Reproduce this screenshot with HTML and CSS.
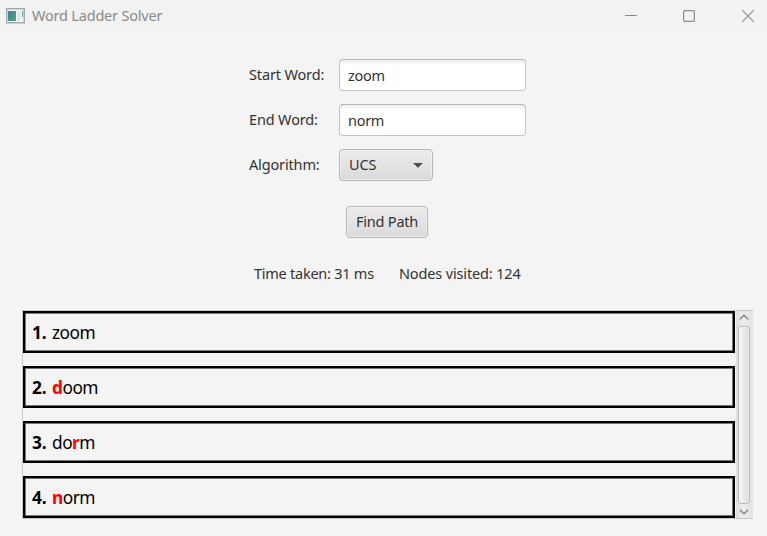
FILE: index.html
```html
<!DOCTYPE html>
<html lang="en">
<head>
<meta charset="utf-8">
<title>Word Ladder Solver</title>
<link rel="stylesheet" href="styles.css">
</head>
<body>
<header class="titlebar">
  <svg class="app-icon" width="19" height="16" viewBox="0 0 19 16">
    <defs><linearGradient id="g" x1="0" y1="0" x2="1" y2="1"><stop offset="0" stop-color="#3e7ca0"/><stop offset="1" stop-color="#55a878"/></linearGradient></defs>
    <rect x=".75" y=".75" width="17.5" height="14" fill="#f5f7f8" stroke="#9b9fa6" stroke-width="1.3"/>
    <rect x="2" y="3" width="8" height="10" fill="url(#g)"/>
    <rect x="11" y="3" width="4" height="10" fill="#e5e8e8"/>
    <path d="M16.5 3v6" stroke="#56a693"/>
  </svg>
  <h1 class="title">Word Ladder Solver</h1>
  <div class="controls">
    <svg width="130" height="14" viewBox="0 0 130 14" fill="none" stroke="#8b8b8b">
      <path d="M0 6.5h12"/>
      <rect x="58.6" y="1.6" width="10.8" height="10.8" rx="1.2" stroke-width="1.2"/>
      <path d="M117.2 1.2l11.6 11.6M128.8 1.2l-11.6 11.6" stroke-width="1.1"/>
    </svg>
  </div>
</header>
<main>
  <div class="form">
    <label class="label" for="start">Start Word:</label><input id="start" class="field" value="zoom">
    <label class="label" for="end">End Word:</label><input id="end" class="field" value="norm">
    <span class="label">Algorithm:</span>
    <div class="combo"><span class="label">UCS</span><svg width="10" height="6" viewBox="0 0 10 6"><path d="M0 1h10L5 6z" fill="#fff"/><path d="M0 0h10L5 5z" fill="#4e4e4e"/></svg></div>
  </div>
  <button class="find">Find Path</button>
  <div class="stats"><span class="time">Time taken: 31 ms</span><span>Nodes visited: 124</span></div>
  <div class="results">
    <ol class="list">
      <li><b>1.</b><span>zoom</span></li>
      <li><b>2.</b><span><em>d</em>oom</span></li>
      <li><b>3.</b><span>do<em>r</em>m</span></li>
      <li><b>4.</b><span><em>n</em>orm</span></li>
    </ol>
    <div class="scrollbar">
      <svg width="10" height="6" viewBox="0 0 10 6"><path d="M.8 5.2L5 1.3l4.2 3.9" fill="none" stroke="#858585" stroke-width="1.4"/></svg>
      <div class="thumb"></div>
      <svg width="10" height="6" viewBox="0 0 10 6"><path d="M.8.8L5 4.7 9.2.8" fill="none" stroke="#858585" stroke-width="1.4"/></svg>
    </div>
  </div>
</main>
</body>
</html>
```
FILE: styles.css
```css
* { box-sizing: border-box; }
body { margin: 0; width: 767px; height: 536px; overflow: hidden; background: #f4f4f4; color: #333; font: 14.5px/20px "Noto Sans", "Open Sans", sans-serif; letter-spacing: -.2px; }
.titlebar { display: flex; align-items: center; height: 31px; padding: 0 12px 0 6px; background: #f2f2f2; color: #8b8b8b; }
.title { margin: 0 0 0 7px; padding-bottom: 2px; font-size: 14.5px; font-weight: 400; }
.controls { display: flex; margin-left: auto; }
main { display: flex; flex-direction: column; }
.form { display: grid; grid-template-columns: 90px 187px; grid-auto-rows: 32px; row-gap: 13px; align-items: center; margin: 28px 0 0 249px; }
.label { padding-bottom: 2px; letter-spacing: -.15px; }
.field { width: 187px; height: 32px; padding: 0 8px 1px; border: 1px solid #c4c4c4; border-top-color: #b5b5b5; border-radius: 4px; background: linear-gradient(#ececec, #fff 5px); color: #333; font: inherit; letter-spacing: -.3px; outline: 0; }
.combo, .find { border: 1px solid #b5b5b5; border-radius: 4px; background: linear-gradient(#ececec, #dadada); box-shadow: inset 0 0 0 1px rgba(255,255,255,.45); }
.combo { display: flex; align-items: center; justify-content: space-between; width: 94px; height: 32px; padding: 0 9px; }
.combo svg { margin-top: 2px; }
.find { width: 82px; height: 32px; margin: 25px 0 0 346px; padding: 0 0 2px; color: #333; font: inherit; letter-spacing: inherit; }
.stats { display: flex; margin: 25px 0 0 254px; white-space: nowrap; letter-spacing: -.15px; }
.time { width: 145px; letter-spacing: -.25px; }
.results { display: flex; width: 731px; height: 209px; margin: 27px 0 0 22px; border: 1px solid #c8c8c8; border-right: 0; }
.list { display: flex; flex-direction: column; gap: 13px; width: 713px; margin: 0; padding: 0; list-style: none; color: #000; font-size: 17.3px; letter-spacing: -.5px; }
.list li { display: flex; align-items: center; width: 712px; height: 42px; padding: 2px 0 0 7px; border: 2px solid #000; box-shadow: inset 0 0 0 1px #777; }
.list b { width: 20px; letter-spacing: -.25px; }
.list em { color: #f00; font-style: normal; font-weight: 700; }
.scrollbar { display: flex; flex-direction: column; align-items: center; justify-content: space-between; width: 17px; padding: 3px 1px 3px 0; background: linear-gradient(90deg, #dedede, #ececec 40%, #e2e2e2); }
.thumb { width: 12px; height: 178px; border: 1px solid #b8b8b8; border-radius: 3px; background: linear-gradient(90deg, #f6f6f6, #dcdcdc); box-shadow: inset 0 0 0 1px rgba(255,255,255,.4); }
```
